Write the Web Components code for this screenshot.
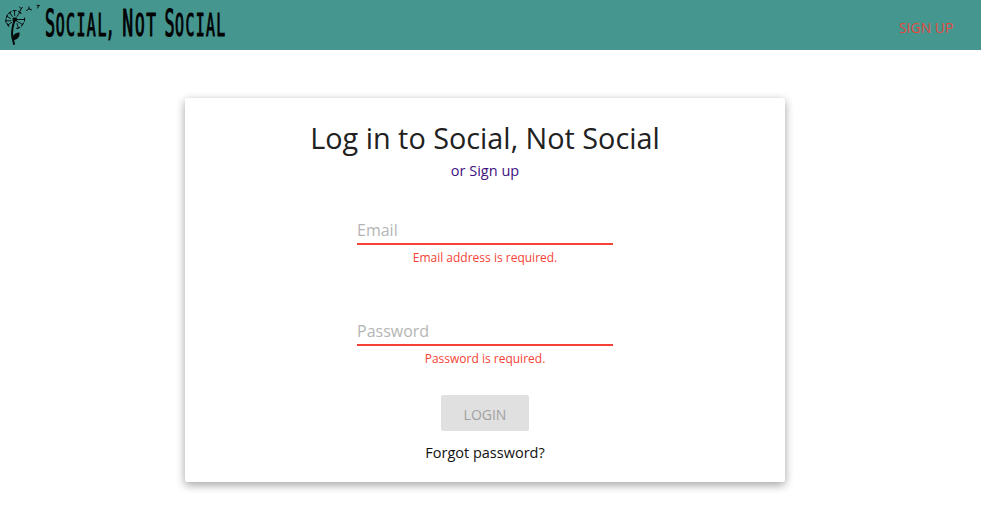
<!DOCTYPE html>
<html lang="en"><head><meta charset="utf-8"><title>Social, Not Social</title>
<style>body{margin:0;min-height:531px;background:#fff;font-family:"Open Sans",sans-serif}</style></head>
<body>
<sns-app></sns-app>
<script>
const define = (name, html) => {
  const t = document.createElement('template');
  t.innerHTML = html;
  customElements.define(name, class extends HTMLElement {
    constructor() {
      super();
      this.attachShadow({mode: 'open'}).append(t.content.cloneNode(true));
    }
  });
};
define('sns-logo', `<style>:host{display:block;height:50px}svg{display:block}
text{font:35px "DejaVu Sans Mono",monospace;fill:#000;stroke:#000;stroke-width:1.100px}.s{font-size:31px;letter-spacing:2.800px}.l{letter-spacing:-1.500px}</style>
<svg width="240" height="50" viewBox="0 0 240 50">
 <g fill="none" stroke="#050b0b" stroke-linecap="round">
  <path stroke-width="2" d="M14.600 20C13 25 11.500 31 12.200 36C12.600 39 13.500 41 14 44"/>
  <path stroke-width=".9" d="M14.700 15.500L14.500 11M12.300 16.500L9.800 12.800M10.500 18.500L6.800 16.200M11 20.800L6 20.800M11.800 22.300L7.800 25M17 16.500L20 12M17 19.500L24.300 19.500M17.500 21.500L22.500 24.500M17 23.500L18.300 28"/>
  <path stroke-width="1.100" d="M13 10.700L16.200 10.500M8.700 13.700L11 11.700M6.400 17.800L7.400 14.800M5.800 19.300L6 22.300M7 23.500L8.800 26.300M18.500 11.300L21 13.300M24.500 18L24.500 21M23.500 23L21.500 26M19.800 27.500L16.800 28.600"/>
  <path stroke-width="1" d="M19.500 7L21.300 8.700L20 11M21.300 8.700L22.300 7.300M26.500 10.500L29 8.800L31.500 9.800M29 8.800L29 7M37 5.300L39.500 5.600M38.500 5.500L37.700 8"/>
 </g>
 <rect x="12.600" y="17.500" width="4.500" height="4" rx="1" fill="#050b0b"/>
 <path d="M12.800 40C12.300 35.500 14 33 19.300 32.200C20.500 36.500 17.500 40 12.800 40Z" fill="#050b0b"/>
 <text transform="translate(45 35.500) scale(.48 1.040)">S<tspan class="s" dx="1.500">OCIA<tspan class="l" dx="1">L</tspan>,</tspan></text>
 <text transform="translate(122.200 35.500) scale(.52 1.040)">N<tspan class="s" dx="3.500">OT</tspan></text>
 <text transform="translate(164.500 35.500) scale(.48 1.040)">S<tspan class="s" dx="1">OCIAL</tspan></text>
</svg>`);
define('sns-header', `<style>:host{display:flex;justify-content:space-between;height:50px;background:#469690}
::slotted(a){color:#f44336;opacity:.9;font-size:14px;line-height:20px;padding:18px 27.500px 0 0;text-decoration:none}</style>
<sns-logo></sns-logo><slot></slot>`);
define('sns-card', `<style>:host{display:flex;flex-direction:column;align-items:center;box-sizing:border-box;width:600px;height:384px;margin:48px 0 0 185px;padding-top:19px;border-radius:2px;background:#fff;box-shadow:0 3px 10px rgba(0,0,0,.23),0 3px 10px rgba(0,0,0,.16)}</style><slot></slot>`);
define('sns-title', `<style>:host{display:block;font-size:28.800px;line-height:41px;color:#212121;white-space:nowrap}</style><slot></slot>`);
define('sns-link', `<style>:host{display:block;font-size:14.500px;line-height:20px;color:var(--link,#111)}</style><slot></slot>`);
define('sns-field', `<style>:host{display:block;width:256px}
.label{height:29px;font-size:16px;line-height:28px;color:#b5b5b5;border-bottom:2px solid #f44336;box-sizing:border-box}
.error{font-size:12px;line-height:17px;margin-top:4px;color:#f44336;text-align:center}</style>
<div class="label"><slot></slot></div><div class="error"><slot name="error"></slot></div>`);
define('sns-button', `<style>:host{display:block;width:88px;height:36px;line-height:39px;background:#e0e0e0;border-radius:2px;color:#a0a0a0;font-size:14px;text-align:center}</style><slot></slot>`);
define('sns-app', `<style>:host{display:block}sns-link{--link:#111}.or{--link:#40107e;margin-top:3px}
.email{margin-top:35px}.password{margin-top:51px}sns-button{margin-top:28px}.forgot{margin-top:12px}</style>
<sns-header><a href="#">SIGN UP</a></sns-header>
<sns-card>
 <sns-title>Log in to Social, Not Social</sns-title>
 <sns-link class="or">or Sign up</sns-link>
 <sns-field class="email">Email<span slot="error">Email address is required.</span></sns-field>
 <sns-field class="password">Password<span slot="error">Password is required.</span></sns-field>
 <sns-button>LOGIN</sns-button>
 <sns-link class="forgot">Forgot password?</sns-link>
</sns-card>`);
</script>
</body></html>
